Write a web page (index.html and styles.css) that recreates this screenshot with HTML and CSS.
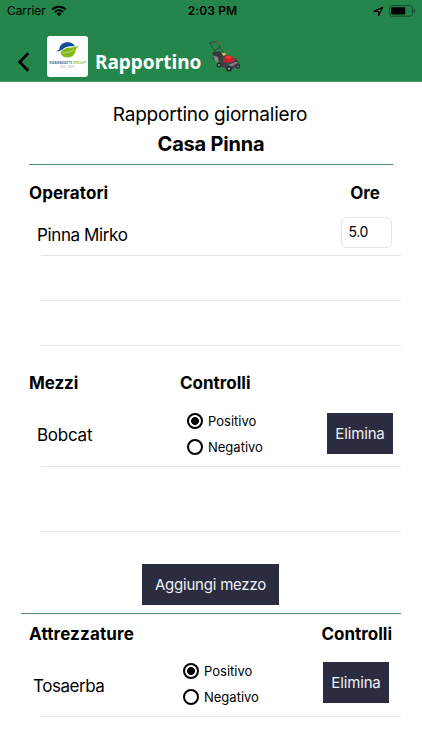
FILE: index.html
```
<!DOCTYPE html>
<html lang="it">
<head>
<meta charset="utf-8">
<title>Rapportino</title>
<link rel="stylesheet" href="styles.css">
</head>
<body>
<header class="top">
  <div class="status">
    <div class="status-left">
      <span class="carrier">Carrier</span>
      <svg class="wifi" width="16" height="12" viewBox="0 0 16 12"><path d="M1.2 4.5a9.5 9.5 0 0 1 13.6 0M3.8 7a6 6 0 0 1 8.4 0" fill="none" stroke="#000" stroke-width="2"/><path d="M8 11.3 5.4 8.8a3.7 3.7 0 0 1 5.2 0z"/></svg>
    </div>
    <span class="clock">2:03 PM</span>
    <div class="status-right">
      <svg width="11" height="11" viewBox="0 0 11 11"><path d="M1 5.3 9.6 1.2 5.6 9.7V5.3z" fill="none" stroke="#000" stroke-width="1.2" stroke-linejoin="round"/></svg>
      <svg width="27" height="12" viewBox="0 0 27 12"><rect x=".6" y=".6" width="22.8" height="10.6" rx="2.4" fill="none" stroke="#124c29" stroke-width="1"/><rect x="2.2" y="2.2" width="14" height="7.4" rx=".8"/><path d="M24.7 4v4c1.8-.5 1.8-3.500 0-4z" fill="#124c29"/></svg>
    </div>
  </div>
  <nav class="nav">
    <svg class="back" width="14" height="20" viewBox="0 0 14 20"><path d="M11.300 1.300 2.600 10l8.700 8.700" fill="none" stroke="#000" stroke-width="2.700"/></svg>
    <svg class="logo" width="41" height="41" viewBox="0 0 41 41">
      <rect width="41" height="41" rx="3" fill="#fff"/>
      <path d="M8 15.200c2-.1 3.500-.8 4.500-2.200C12.500 8.500 16.500 6.200 20.500 6.200c4 0 7 2 7.200 4.500-5-1-9.200.300-12.200 2.800-2 1.600-5 2.200-7.500 1.700z" fill="#124e98"/>
      <path d="M13.500 17.300c1.500-3.800 5-5.600 9-5.600 3.500 0 5.500-.3 9.200-2.200-1.200 2.500-3 3.300-3.200 5.500-.7 4-4 6.500-8 6.500-3.300 0-6-1.700-7-4.200z" fill="#83b817"/>
      <path d="M14.500 17.300c5-.2 9-1.200 13-4" fill="none" stroke="#dce9c0" stroke-width=".6"/>
      <text x="2.300" y="27.500" class="logo-name" textLength="36.500" lengthAdjust="spacingAndGlyphs"><tspan fill="#37609b">SGARAVATTI</tspan> <tspan fill="#9ac23c">GROUP</tspan></text>
      <text x="13.500" y="31.500" class="logo-sub" textLength="14">Dal 1820</text>
    </svg>
    <h1 class="title">Rapportino</h1>
    <svg class="mower" width="33" height="33" viewBox="0 0 33 33">
      <path d="M10 17 1.500 2.500 8.500 1.700 M11 5l1 2.500L18 15M6.500 10.500l6-3" fill="none" stroke="#3c4447" stroke-width="1"/>
      <path d="m8 1.500 1.500.3 1.500 3.400" fill="none" stroke="#a33b38" stroke-width="1"/>
      <path d="m4.500 12.300 7.500-1 5 5.500-7 4-5-2z" fill="#33393c"/>
      <path d="m5 15.500 5 1.500 2 7-5-3.500z" fill="#858b8b"/>
      <path d="m10 19 7-4.500 11 4 4 6-8.500 5-12-3z" fill="#3d4145"/>
      <path d="m15 18 4-3 6.500 1.800 2 4-6.500 2.400-6-1.500z" fill="#b9272b"/>
      <path d="m16.500 17 5-1.500 3.500 2-4.500 2z" fill="#ee3533"/>
      <path d="m13.500 13.500 3-.9 2 2-3 1.500z" fill="#e1b53b"/>
      <path d="m20 25 8-3.200 2 1-7 4z" fill="#7b8184"/>
      <circle cx="11" cy="25" r="2.500" fill="#25292d"/><circle cx="11" cy="25" r="1" fill="#9ba0a3"/>
      <circle cx="21" cy="28.700" r="2.900" fill="#25292d"/><circle cx="21" cy="28.700" r="1.100" fill="#a4a8ab"/>
      <circle cx="30" cy="26.500" r="2.200" fill="#292d31"/><circle cx="30" cy="26.500" r=".8" fill="#92979a"/>
    </svg>
  </nav>
</header>
<main>
  <section class="intro">
    <p class="subtitle">Rapportino giornaliero</p>
    <h2 class="site">Casa Pinna</h2>
  </section>
  <section class="operators">
    <div class="heads"><h3 class="h-op">Operatori</h3><h3 class="h-ore">Ore</h3></div>
    <div class="row row-op"><span class="name n-pinna">Pinna Mirko</span><span class="hours">5.0</span></div>
    <div class="row empty-small"></div>
    <div class="row empty-small"></div>
  </section>
  <section class="vehicles">
    <div class="heads"><h3 class="col-name h-mezzi">Mezzi</h3><h3 class="h-ctrl">Controlli</h3></div>
    <div class="row row-vehicle">
      <span class="name n-bobcat">Bobcat</span>
      <div class="radios">
        <div class="option"><i class="radio on"></i><span class="pos">Positivo</span></div>
        <div class="option"><i class="radio"></i><span class="neg">Negativo</span></div>
      </div>
      <div class="button del">Elimina</div>
    </div>
    <div class="row empty-large"></div>
    <div class="button add">Aggiungi mezzo</div>
  </section>
  <section class="tools">
    <div class="heads"><h3 class="h-att">Attrezzature</h3><h3 class="h-ctrl">Controlli</h3></div>
    <div class="row row-tool">
      <span class="name n-tosa">Tosaerba</span>
      <div class="radios">
        <div class="option"><i class="radio on"></i><span class="pos">Positivo</span></div>
        <div class="option"><i class="radio"></i><span class="neg">Negativo</span></div>
      </div>
      <div class="button del">Elimina</div>
    </div>
  </section>
</main>
</body>
</html>
```
FILE: styles.css
```
* { box-sizing: border-box; }
body { margin: 0; height: 750px; overflow: hidden; background: #fff; color: #000; font-family: Inter, "Liberation Sans", sans-serif; }
h1, h2, h3, p { margin: 0; white-space: nowrap; }
svg { display: block; flex: none; }

.top { height: 82px; background: #24864a; border-bottom: 1px solid #4a9b69; }
.status { height: 22px; display: grid; grid-template-columns: 1fr auto 1fr; align-items: center; padding: 0 6px 0 7px; font-size: 12px; line-height: 22px; }
.status-left, .status-right { display: flex; align-items: center; }
.status-left { gap: 5px; }
.status-right { justify-content: flex-end; gap: 5px; }
.carrier { letter-spacing: -.1px; }
.clock { font-weight: 600; letter-spacing: .1px; padding-left: 2px; }
.nav { height: 59px; display: flex; padding-left: 17px; }
.back { margin-top: 30px; }
.logo { margin: 14px 0 0 16px; }
.logo-name { font: 600 4px Inter, sans-serif; }
.logo-sub { font: 3px Inter, sans-serif; fill: #98a5b5; }
.title { width: 106px; margin: 26px 0 0 7px; color: #fff; font: 700 19px/28px "Noto Sans", sans-serif; }
.mower { margin: 18px 0 0 7px; }

.intro { height: 83px; margin: 0 29px; padding-top: 18px; border-bottom: 1px solid #468d66; text-align: center; }
.subtitle { font-size: 19px; line-height: 30px; letter-spacing: -.22px; padding-right: 2px; }
.site { font-size: 20px; line-height: 28px; font-weight: 700; letter-spacing: -.2px; }

.heads { display: flex; justify-content: space-between; }
h3 { font-size: 17px; line-height: 24px; font-weight: 700; }
.row { margin: 0 21px 0 41px; border-bottom: 1px solid #e6e6e6; }
.name { font-size: 17px; line-height: 24px; white-space: nowrap; }

.operators .heads { padding: 16px 42px 0 29px; height: 51px; }
.h-op { letter-spacing: .06px; }
.row-op { height: 40px; display: flex; justify-content: space-between; }
.row-op .name { margin: 7px 0 0 -4px; letter-spacing: -.38px; }
.hours { width: 51px; height: 31px; margin: 1px 9px 0 0; padding-left: 6.500px; border: 1px solid #e5e5e5; border-radius: 6px; font-size: 14px; line-height: 28px; letter-spacing: -.35px; }
.empty-small { height: 45px; }

.vehicles { height: 267px; }
.vehicles .heads { justify-content: flex-start; height: 66px; padding: 25px 0 0 29px; }
.h-mezzi { letter-spacing: -.1px; }
.col-name { width: 151px; }
.row-vehicle { height: 55px; display: flex; }
.row-vehicle .name { width: 150px; margin: 11px 0 0 -4px; letter-spacing: -.25px; }
.row-vehicle .radios { width: 140px; }
.radios { display: flex; flex-direction: column; gap: 7px; width: 140px; margin-top: -1px; }
.option { display: flex; align-items: center; gap: 5px; height: 19.500px; font-size: 13px; line-height: 20px; }
.radio { width: 16px; height: 16px; border: 2px solid #000; border-radius: 50%; flex: none; }
.radio.on { background: radial-gradient(circle, #000 3.600px, #fff 4.300px); }
.button { background: #2b2c40; color: #f1f1f6; font-size: 15px; text-align: center; white-space: nowrap; }
.del { width: 66px; height: 41px; line-height: 41px; letter-spacing: -.15px; }
.row-vehicle .del { margin-top: .5px; }
.empty-large { height: 65px; }
.add { width: 137px; height: 41px; margin: 32px 0 0 142px; line-height: 41px; letter-spacing: -.22px; }

.tools { margin: 0 21px; border-top: 1px solid #468d66; }
.tools .heads { height: 48px; padding: 8px 9px 0 8px; }
.h-att { letter-spacing: .15px; }
.tools .row { margin: 0 0 0 20px; height: 55px; display: flex; }
.row-tool .name { width: 150px; margin: 12px 0 0 -8px; letter-spacing: -.45px; }
```
